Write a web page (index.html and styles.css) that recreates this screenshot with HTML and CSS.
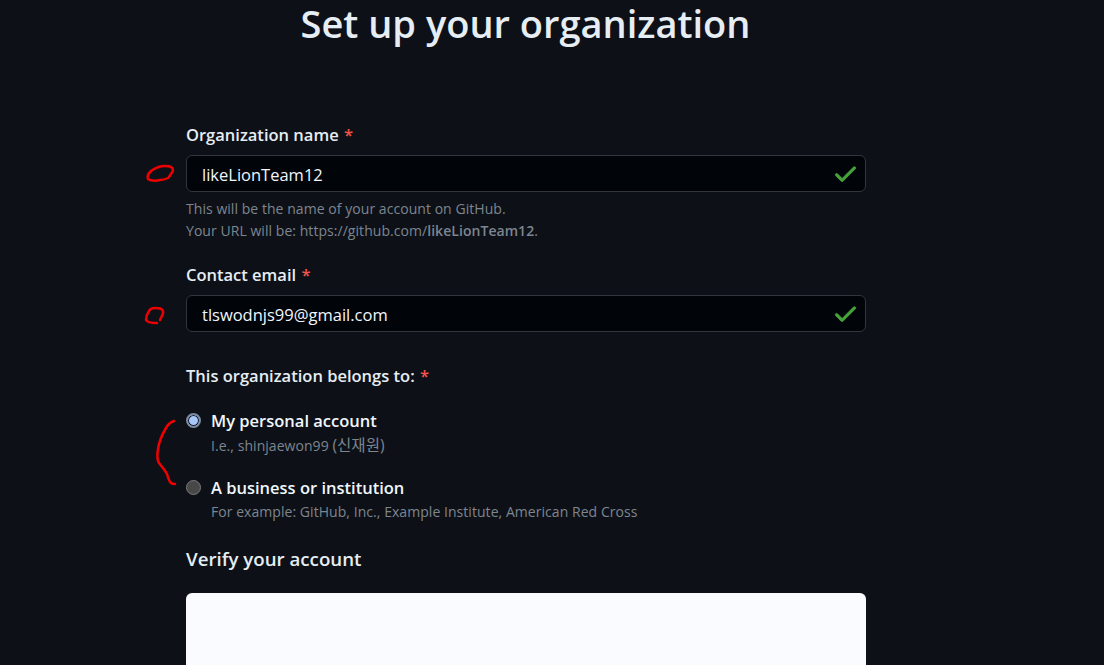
FILE: index.html
```html
<!DOCTYPE html>
<html>
<head>
    <title>Set up your organization</title>
    <link rel="stylesheet" href="styles.css">
</head>
<body>
    <h1 class="page-title">Set up your organization</h1>

    <form class="org-form">
        <div class="field field-name">
            <label class="field-label">Organization name <span class="req">*</span></label>
            <div class="input-box">
                <span class="input-value">likeLionTeam12</span>
                <svg class="check" viewBox="0 0 16 16" width="27" height="27"><path d="M13.78 4.22a.75.75 0 0 1 0 1.06l-7.25 7.25a.75.75 0 0 1-1.06 0L2.22 9.28a.75.75 0 1 1 1.06-1.06L6 10.94l6.72-6.72a.75.75 0 0 1 1.06 0Z"/></svg>
            </div>
            <p class="note">This will be the name of your account on GitHub.</p>
            <p class="note">Your URL will be: https://github.com/<b>likeLionTeam12</b>.</p>
        </div>

        <div class="field field-email">
            <label class="field-label">Contact email <span class="req">*</span></label>
            <div class="input-box">
                <span class="input-value">tlswodnjs99@gmail.com</span>
                <svg class="check" viewBox="0 0 16 16" width="27" height="27"><path d="M13.78 4.22a.75.75 0 0 1 0 1.06l-7.25 7.25a.75.75 0 0 1-1.06 0L2.22 9.28a.75.75 0 1 1 1.06-1.06L6 10.94l6.72-6.72a.75.75 0 0 1 1.06 0Z"/></svg>
            </div>
        </div>

        <div class="field-label belongs">This organization belongs to: <span class="req">*</span></div>

        <div class="radio-row">
            <span class="radio radio-on"></span>
            <div>
                <div class="radio-title">My personal account</div>
                <p class="note">I.e., shinjaewon99 <span class="ko">(신재원)</span></p>
            </div>
        </div>
        <div class="radio-row">
            <span class="radio"></span>
            <div>
                <div class="radio-title">A business or institution</div>
                <p class="note">For example: GitHub, Inc., Example Institute, American Red Cross</p>
            </div>
        </div>

        <h2 class="verify-title">Verify your account</h2>
        <div class="captcha"></div>
    </form>

    <!-- red pen marks on top of the screenshot -->
    <svg class="scribbles" width="1104" height="665" viewBox="0 0 1104 665" fill="none">
        <path d="M169 177c1-2 4-5 4-7 0-3-4-4-8-4-5 0-10 2-14 5-3 3-4 6-3 8 2 2 8 2 12 1 3 0 6-1 8-2"/>
        <path d="M160 320c1-3 4-6 3-9-1-3-4-3-8-3-3 0-5 1-6 3-2 3-3 6-3 9 1 2 6 3 11 3"/>
        <path d="M174 421c-3 1-6 3-8 7-3 5-7 14-8 21-1 6-1 11 1 14 3 4 6 7 8 11 1 3 2 7 4 9 1 1 3 1 4 1"/>
    </svg>
</body>
</html>
```

FILE: styles.css
```css
html, body {
    height: 665px;
    overflow: hidden;
}

body {
    font-family: "Open Sans", "Noto Sans CJK KR", sans-serif;
    background: #0d1117;
    color: #e6edf3;
    margin: 0;
    padding: 0;
}

.page-title {
    margin: 0;
    padding: 0 53px 0 0;
    height: 125px;
    box-sizing: border-box;
    text-align: center;
    font-size: 38px;
    line-height: 46px;
    font-weight: 600;
}

.org-form {
    width: 680px;
    margin-left: 186px;
}

.field-label {
    display: block;
    font-size: 16.5px;
    line-height: 20px;
    font-weight: 600;
}

.req {
    color: #f85149;
    margin-left: 1px;
}

.field-name .field-label,
.field-email .field-label {
    margin-bottom: 10px;
}

.input-box {
    height: 37px;
    box-sizing: border-box;
    display: flex;
    align-items: center;
    justify-content: space-between;
    padding: 0 6px 0 15px;
    background: #010409;
    border: 1px solid #30363d;
    border-radius: 6px;
}

.input-value {
    padding-top: 1px;
    font-size: 16.5px;
    color: #f0f6fc;
}

.check {
    fill: #46a33a;
    stroke: #46a33a;
    stroke-width: 0.5;
}

.note {
    margin: 0;
    font-size: 14px;
    line-height: 22px;
    color: #7d8590;
    letter-spacing: 0.05px;
}

.note b {
    font-weight: 600;
}

.ko {
    font-size: 15.5px;
}

.field-name .input-box {
    margin-bottom: 6px;
}

.field-email {
    margin-top: 23px;
}

.belongs {
    margin-top: 34px;
    margin-bottom: 24px;
}

.radio-row {
    display: flex;
    gap: 10px;
    margin-bottom: 20px;
    height: 47px;
}

.radio-row + .radio-row {
    margin-bottom: 23px;
}

.radio {
    flex: none;
    width: 15px;
    height: 15px;
    box-sizing: border-box;
    margin-top: 3px;
    border-radius: 50%;
    background: #484848;
    border: 1px solid #7a7a7a;
}

.radio-on {
    background: #a8c7fa;
    border: 2px solid #7a8aa0;
    box-shadow: inset 0 0 0 1px #0d1117;
}

.radio-title {
    font-size: 16.5px;
    line-height: 22px;
    font-weight: 600;
    color: #f0f6fc;
}

.radio-title + .note {
    margin-top: 2px;
}

.verify-title {
    margin: 0 0 22px;
    font-size: 18.7px;
    line-height: 24px;
    font-weight: 600;
}

.captcha {
    height: 72px;
    background: #f9fbfe;
    border-radius: 6px 6px 0 0;
}

.scribbles {
    position: absolute;
    left: 0;
    top: 0;
    pointer-events: none;
}

.scribbles path {
    stroke: #f00000;
    stroke-width: 2.5;
    stroke-linecap: round;
    stroke-linejoin: round;
}
```
